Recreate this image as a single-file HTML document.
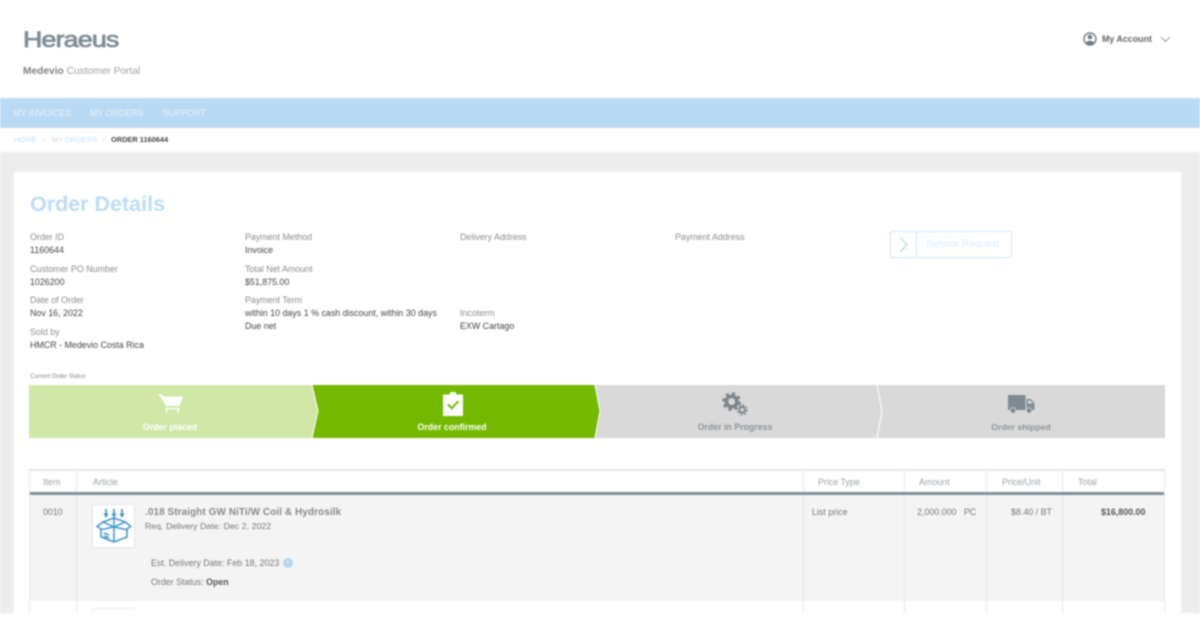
<!DOCTYPE html>
<html><head><meta charset="utf-8"><style>
html,body{margin:0;padding:0;background:#fff;width:1200px;height:617px;overflow:hidden}
#p{position:absolute;left:0;top:0;width:1200px;height:617px;overflow:hidden;background:#fff;font-family:"Liberation Sans",sans-serif;filter:blur(0.7px)}
#p div,#p span.a,#p svg{position:absolute}
.t{white-space:nowrap;font-size:8.9px;line-height:12px}
.l{color:#8b8b8b}
.v{color:#444}
.th{color:#9aa1a6;font-size:8.9px;line-height:12px;white-space:nowrap}
.s{color:#fff;font-size:8.800px;font-weight:bold;white-space:nowrap;text-align:center;line-height:12px}
.vl{width:1px;background:#e6e8e8}
</style></head><body><div id="p">
<div style="left:0;top:152px;width:1200px;height:461px;background:#ededed"></div>
<div style="left:14px;top:172px;width:1167px;height:441px;background:#fff"></div>

<div class="t" style="left:23px;top:27px;font-size:22px;line-height:26px;color:#7f8b93;-webkit-text-stroke:0.75px #7f8b93;letter-spacing:-0.7px;transform:scaleX(1.22);transform-origin:0 0">Heraeus</div>
<div class="t" style="left:23px;top:66px;font-size:10.200px;color:#a0a0a0"><b style="color:#808080">Medevio</b> Customer Portal</div>

<svg style="left:1083px;top:32px" width="14" height="14" viewBox="0 0 14 14"><circle cx="7" cy="7" r="6" fill="none" stroke="#6f7a82" stroke-width="1.4"/><circle cx="7" cy="5" r="2.3" fill="#6f7a82"/><path d="M3 11c.5-3 7.500-3 8 0l-1.500 1.500h-5z" fill="#6f7a82"/></svg>
<div class="t" style="left:1102px;top:33px;font-size:8.900px;font-weight:bold;color:#666">My Account</div>
<svg style="left:1160px;top:36px" width="11" height="7" viewBox="0 0 11 7"><path d="M1 1l4.500 4.500L10 1" fill="none" stroke="#9aa0a4" stroke-width="1.100"/></svg>

<div style="left:0;top:98px;width:1200px;height:30px;background:#b9daf4"></div>
<div class="t" style="left:13px;top:107px;color:#e4f0fa">MY INVOICES</div>
<div class="t" style="left:90px;top:107px;color:#e4f0fa">MY ORDERS</div>
<div class="t" style="left:163px;top:107px;color:#e4f0fa">SUPPORT</div>

<div class="t" style="left:14px;top:134px;font-size:7.500px;color:#c5dff4">HOME</div>
<div class="t" style="left:43px;top:134px;font-size:7.500px;color:#c5dff4">/</div>
<div class="t" style="left:52px;top:134px;font-size:7.500px;color:#c5dff4">MY ORDERS</div>
<div class="t" style="left:103px;top:134px;font-size:7.500px;color:#c5dff4">/</div>
<div class="t" style="left:111px;top:134px;font-size:7.400px;font-weight:bold;color:#444">ORDER 1160644</div>

<div class="t" style="left:30px;top:190px;font-size:21.500px;line-height:28px;font-weight:bold;color:#bbdcf5">Order Details</div>

<div class="t l" style="left:30px;top:231px">Order ID</div>
<div class="t v" style="left:30px;top:244px">1160644</div>
<div class="t l" style="left:30px;top:263px">Customer PO Number</div>
<div class="t v" style="left:30px;top:276px">1026200</div>
<div class="t l" style="left:30px;top:294px">Date of Order</div>
<div class="t v" style="left:30px;top:307px">Nov 16, 2022</div>
<div class="t l" style="left:30px;top:326px">Sold by</div>
<div class="t v" style="left:30px;top:339px">HMCR - Medevio Costa Rica</div>

<div class="t l" style="left:245px;top:231px">Payment Method</div>
<div class="t v" style="left:245px;top:244px">Invoice</div>
<div class="t l" style="left:245px;top:263px">Total Net Amount</div>
<div class="t v" style="left:245px;top:276px">$51,875.00</div>
<div class="t l" style="left:245px;top:294px">Payment Term</div>
<div class="t v" style="left:245px;top:307px">within 10 days 1 % cash discount, within 30 days</div>
<div class="t v" style="left:245px;top:320px">Due net</div>

<div class="t l" style="left:460px;top:231px">Delivery Address</div>
<div class="t l" style="left:460px;top:307px">Incoterm</div>
<div class="t v" style="left:460px;top:320px">EXW Cartago</div>
<div class="t l" style="left:675px;top:231px">Payment Address</div>

<div style="left:890px;top:231px;width:120px;height:25px;border:1px solid #d2e7f9"></div>
<div style="left:916px;top:232px;width:1px;height:25px;background:#d2e7f9"></div>
<svg style="left:897px;top:236px" width="14" height="17" viewBox="0 0 14 17"><path d="M3.500 1.500l6.500 7-6.500 7" fill="none" stroke="#c5e0f7" stroke-width="1.700"/></svg>
<div class="t" style="left:926px;top:239px;font-size:10px;color:#d8eafa">Service Request</div>

<div class="t" style="left:30px;top:373px;font-size:6px;line-height:9px;color:#888">Current Order Status</div>

<svg style="left:29px;top:385px" width="1136" height="53" viewBox="0 0 1136 53">
<rect width="1136" height="53" y="0" fill="#d9d9d9" x="0"/>
<rect x="0" y="0" width="290" height="53" fill="#d0e7a8"/>
<path d="M283 0H566L571 26L566 53H283L289 26Z" fill="#74b900"/>
<path d="M283 0L289 26L283 53" fill="none" stroke="#fff" stroke-width="1"/>
<path d="M566 0L571 26L566 53" fill="none" stroke="#fff" stroke-width="1"/>
<path d="M848 0L853 26L848 53" fill="none" stroke="#fff" stroke-width="1"/>
</svg>

<svg style="left:157px;top:393px" width="28" height="22" viewBox="0 0 28 22"><path d="M1.500 1h2.500l2.500 2.500H26L22.500 13H9.500z" fill="#fff"/><path d="M4 1.500L9.500 13" stroke="#fff" stroke-width="1.200"/><path d="M8.500 15h14v1.200h-14zM9 16h1.200v4.500H9zM20.500 16h1.200v4.500h-1.200z" fill="#fff"/></svg>
<div class="s" style="left:120px;top:421px;width:100px">Order placed</div>

<svg style="left:442px;top:391px" width="22" height="26" viewBox="0 0 22 26"><path d="M1 3.500h6.500l1-2.500h5l1 2.500H21V25H1z" fill="#fff"/><path d="M6 13.500l3.800 3.800 6.500-7" fill="none" stroke="#74b900" stroke-width="2"/></svg>
<div class="s" style="left:392px;top:421px;width:120px">Order confirmed</div>

<svg style="left:722px;top:392px" width="27" height="24" viewBox="0 0 28 25"><g fill="none" stroke="#7b858c"><circle cx="10" cy="10" r="5.500" stroke-width="3.800"/><circle cx="10" cy="10" r="8.500" stroke-width="2.400" stroke-dasharray="3.400 3.270"/><circle cx="21" cy="18.500" r="3" stroke-width="2"/><circle cx="21" cy="18.500" r="5" stroke-width="1.600" stroke-dasharray="2 1.930"/></g></svg>
<div class="t" style="left:685px;top:421px;width:100px;text-align:center;font-size:8.800px;color:#8e9498;font-weight:bold">Order in Progress</div>

<svg style="left:1008px;top:395px" width="27" height="19" viewBox="0 0 27 19"><rect x="0" y="0" width="17.500" height="15" fill="#7e8a93"/><path d="M18.500 4h4.500l3.500 4.500V15h-8z" fill="#7e8a93"/><path d="M20 5.500h2.500L25 8.500h-5z" fill="#d9d9d9"/><circle cx="5" cy="15.500" r="2.800" fill="#7e8a93" stroke="#d9d9d9" stroke-width=".8"/><circle cx="21" cy="15.500" r="2.800" fill="#7e8a93" stroke="#d9d9d9" stroke-width=".8"/></svg>
<div class="t" style="left:971px;top:421px;width:100px;text-align:center;font-size:8.700px;color:#8e9498;font-weight:bold">Order shipped</div>

<div style="left:29px;top:469px;width:1136px;height:2px;background:#e6e6e6"></div>
<div style="left:29px;top:492px;width:1136px;height:3px;background:#7f8d98"></div>
<div style="left:29px;top:495px;width:1136px;height:106px;background:#f4f4f4"></div>
<div class="vl" style="left:29px;top:471px;height:142px"></div>
<div class="vl" style="left:76px;top:471px;height:21px"></div><div class="vl" style="left:76px;top:495px;height:118px"></div>
<div class="vl" style="left:803px;top:471px;height:21px"></div><div class="vl" style="left:803px;top:495px;height:118px"></div>
<div class="vl" style="left:904px;top:471px;height:21px"></div><div class="vl" style="left:904px;top:495px;height:118px"></div>
<div class="vl" style="left:986px;top:471px;height:21px"></div><div class="vl" style="left:986px;top:495px;height:118px"></div>
<div class="vl" style="left:1062px;top:471px;height:21px"></div><div class="vl" style="left:1062px;top:495px;height:118px"></div>
<div class="vl" style="left:1164px;top:471px;height:142px"></div>

<div class="th" style="left:43px;top:476px">Item</div>
<div class="th" style="left:93px;top:476px">Article</div>
<div class="th" style="left:818px;top:476px">Price Type</div>
<div class="th" style="left:919px;top:476px">Amount</div>
<div class="th" style="left:1002px;top:476px">Price/Unit</div>
<div class="th" style="left:1078px;top:476px">Total</div>

<div class="t" style="left:43px;top:506px;color:#777">0010</div>
<div style="left:93px;top:505px;width:41px;height:42px;background:#fff;box-shadow:0 0 2px #ccc"></div>
<svg style="left:96px;top:508px" width="35" height="36" viewBox="0 0 35 36"><g fill="none" stroke="#3b93c7" stroke-width="1.500"><path d="M10 1v5M18 1v5M26 1v5" stroke-width="1.700"/><path d="M7 14L18 10l11 4-11 5z"/><path d="M7 14L1 18.500l5 3 12-2.500 12 2.500 5-3-6-4.500"/><path d="M5 21v8l13 5 13-5v-8"/><path d="M18 19v15M18 9v10"/><path d="M8 25l5 2M8 28l5 2"/></g><path d="M7.500 5.500h5L10 10zM15.500 5.500h5L18 10zM23.500 5.500h5L26 10z" fill="#3b93c7"/></svg>
<div class="t" style="left:145px;top:507px;font-weight:bold;font-size:10px;color:#8a8a8a;letter-spacing:.06px">.018 Straight GW NiTi/W Coil &amp; Hydrosilk</div>
<div class="t" style="left:145px;top:520px;font-size:8.700px;color:#777;word-spacing:.3px">Req. Delivery Date: Dec 2, 2022</div>
<div class="t" style="left:151px;top:557px;font-size:8.900px;color:#777">Est. Delivery Date: Feb 18, 2023</div>
<div style="left:283px;top:558px;width:10px;height:10px;border-radius:50%;background:#b5d8f3"></div>
<div class="t" style="left:287px;top:557px;font-size:7px;color:#eaf4fc">i</div>
<div class="t" style="left:151px;top:576px;font-size:8.850px;color:#777">Order Status: <b style="color:#555">Open</b></div>
<div class="t" style="left:812px;top:506px;color:#777">List price</div>
<div class="t" style="left:917px;top:506px;color:#777">2,000.000 &nbsp;&nbsp;PC</div>
<div class="t" style="left:1011px;top:506px;color:#777">$8.40 / BT</div>
<div class="t" style="left:1101px;top:506px;font-weight:bold;color:#555">$16,800.00</div>
<div style="left:93px;top:609px;width:41px;height:4px;background:#fff;box-shadow:0 0 2px #ccc"></div>
<div style="left:0;top:613px;width:1200px;height:4px;background:#fff"></div>
</div></body></html>
